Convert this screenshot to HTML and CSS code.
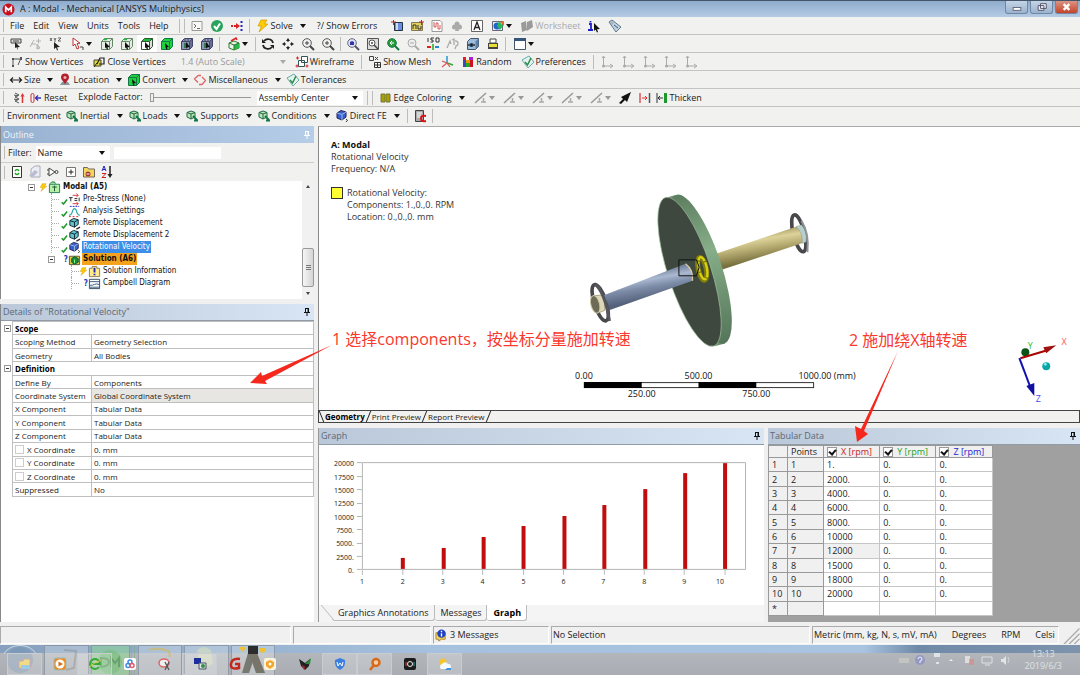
FILE: index.html
```html
<!DOCTYPE html>
<html lang="en">
<head>
    <meta charset="UTF-8">
    <meta name="viewport" content="width=device-width, initial-scale=1.0">
    <title>A : Modal - Mechanical [ANSYS Multiphysics]</title>
    <link rel="stylesheet" href="styles.css">
</head>
<body>
    <!-- Icon sprite -->
    <svg class="sprite" aria-hidden="true">
        <symbol id="console" viewBox="0 0 14 14"><path d="M2 2.500h10v9H2z" fill="#f8f8f8" stroke="#999"/><path d="M4 5l2 2-2 2M7 9.500h3" fill="none" stroke="#666"/></symbol>
        <symbol id="ok" viewBox="0 0 14 14"><circle cx="7" cy="7" r="6" fill="#2aa35e"/><path d="M4 7l2.500 3L10 4.500" fill="none" stroke="#fff" stroke-width="2"/></symbol>
        <symbol id="flow" viewBox="0 0 14 14"><path d="M1 7h5" stroke="#d22" stroke-width="2" stroke-dasharray="2 1"/><path d="M6 4l4 3-4 3z" fill="#d22"/><path d="M11.500 2v10" stroke="#22c" stroke-width="2" stroke-dasharray="2 2"/></symbol>
        <symbol id="bolt" viewBox="0 0 14 14"><path d="M5 1h6L8.500 5H12L3 13l2.500-6H2z" fill="#fc0" stroke="#c90" stroke-width=".7"/></symbol>
        <symbol id="chartnew" viewBox="0 0 14 14"><path d="M4.500 3.500h8v8h-8z" fill="#6a8fe0" stroke="#234"/><path d="M7 4v7" stroke="#cde" stroke-width="2"/><path d="M1 3h5M3.500 1v5" stroke="#c22"/></symbol>
        <symbol id="comment" viewBox="0 0 14 14"><path d="M1.500 3.500h11v8h-11z" fill="#dfd060" stroke="#875"/><path d="M3 10V6h3v4M8 6v4h3V7" fill="none" stroke="#333"/><path d="M9 3h5M11.500 1v5" stroke="#c22"/></symbol>
        <symbol id="figure" viewBox="0 0 14 14"><path d="M2 1.500h8l2 2v9H2z" fill="#fff" stroke="#999"/><path d="M4 3v5h2V4h2v6h2V6" fill="none" stroke="#d55"/></symbol>
        <symbol id="club" viewBox="0 0 14 14"><g fill="#aaa"><circle cx="7" cy="5" r="2.500"/><circle cx="4.500" cy="8" r="2.500"/><circle cx="9.500" cy="8" r="2.500"/><path d="M6 8h2l1 4H5z"/></g></symbol>
        <symbol id="annot" viewBox="0 0 14 14"><path d="M1.500 1.500h11v11h-11z" fill="#fff" stroke="#666"/><path d="M4 11l3-8 3 8M5 8.500h4" fill="none" stroke="#222" stroke-width="1.300"/></symbol>
        <symbol id="image" viewBox="0 0 14 14"><path d="M1.500 2.500h10v9h-10z" fill="#eef" stroke="#667"/><circle cx="6" cy="7" r="3.500" fill="#26c"/><path d="M6 7l2-5 4 5-3 4z" fill="#2b5"/><path d="M9 3l4-1v5z" fill="#e62"/></symbol>
        <symbol id="worksheet" viewBox="0 0 14 14"><path d="M1 4l5-2 1 9-5 2zM7 3l5-2 1 7-6 4z" fill="#9a9a9a"/></symbol>
        <symbol id="info" viewBox="0 0 14 14"><path d="M1 5h2v6M0 11h5M2.500 2v1.500" fill="none" stroke="#22c" stroke-width="1.800"/><path d="M6 4l6 6-3 .2L10 13l-1 .5-1.500-3L6 12z" fill="#111"/></symbol>
        <symbol id="tag" viewBox="0 0 14 14"><path d="M1 3l3-2 9 7-5 5z" fill="#bcd4e4" stroke="#678"/><circle cx="4" cy="4" r="1" fill="#fff" stroke="#678" stroke-width=".6"/><path d="M6 6l4 3" stroke="#456"/></symbol>
        <symbol id="pickbox" viewBox="0 0 14 14"><path d="M2 2h10v4H2zM4 4h6" fill="#ddd" stroke="#444"/><path d="M6 5l5 5-2.500.2.500 3-1.500-3L6 11z" fill="#222"/></symbol>
        <symbol id="pickgray" viewBox="0 0 14 14"><path d="M1 10l4-7M2 7h5M7 4h5M9.500 1.500v5M8 7l3 4-3 1z" fill="#ccc" stroke="#b4b4b4"/></symbol>
        <symbol id="xyz" viewBox="0 0 14 14"><path d="M1 1l2 3m0-3L1 4M5 1l1 2 1-2M6 3v2M9 1h3L9 4h3" fill="none" stroke="#444" stroke-width=".8"/><path d="M5 5l6 5-3 .2L9 13l-1 .5-1-3L5 12z" fill="#222"/></symbol>
        <symbol id="arrowsel" viewBox="0 0 14 14"><path d="M2 1v8l2-2 2 5 2-1-2-4.500 3-.3z" fill="#fff" stroke="#b33"/><path d="M9 10h3v3" fill="none" stroke="#444"/></symbol>
        <symbol id="cubew" viewBox="0 0 14 14"><path d="M1.500 4.500l3-3h8v8l-3 3h-8z" fill="#e4ece4" stroke="#686"/><path d="M1.500 4.500h8v8M9.500 4.500l3-3" fill="none" stroke="#686"/><path d="M4 2.500h3" stroke="#2b4" stroke-width="1.500"/><path d="M5 5l5 5-2.500.2.500 2-1 .5-1-2.500-1 1z" fill="#111"/></symbol>
        <symbol id="cubetop" viewBox="0 0 14 14"><path d="M1.500 4.500h8v8h-8z" fill="#fff" stroke="#353"/><path d="M1.500 4.500l3-3h8l-3 3z" fill="#1db93b" stroke="#353"/><path d="M12.500 1.500v8l-3 3v-8z" fill="#ddd" stroke="#353"/><path d="M5 5l5 5-2.500.2.500 2-1 .5-1-2.500-1 1z" fill="#111"/></symbol>
        <symbol id="cubeg" viewBox="0 0 14 14"><path d="M1.500 4.500l3-3h8v8l-3 3h-8z" fill="#1fd03f" stroke="#174"/><path d="M1.500 4.500h8v8M9.500 4.500l3-3" fill="none" stroke="#174"/><path d="M5 6l4 4-2 .2.500 2-1 .5-1-2.500z" fill="#111"/></symbol>
        <symbol id="cubed" viewBox="0 0 14 14"><path d="M1.500 4.500l3-3h8v8l-3 3h-8z" fill="#8a9ab8" stroke="#446"/><path d="M1.500 4.500h8v8M9.500 4.500l3-3M5 2v3M8 2v3M11 3v8" fill="none" stroke="#446"/><path d="M4 6h4v5H4z" fill="#375"/><path d="M6 5l4 5-3 .2L6 12z" fill="#111"/></symbol>
        <symbol id="cubeax" viewBox="0 0 14 14"><path d="M2 6l5-2 5 2v5l-5 2-5-2z" fill="#e8f4e8" stroke="#373"/><path d="M7 8l5-2v5l-5 2z" fill="#2b4"/><path d="M2 6l5 2 5-2M7 8v5" fill="none" stroke="#373"/><path d="M4 4l5-3 1 2" fill="none" stroke="#d22" stroke-width="1.500"/></symbol>
        <symbol id="rotate" viewBox="0 0 14 14"><path d="M12 6a5 4.500 0 0 0-9-2M2 8a5 4.500 0 0 0 9 2" fill="none" stroke="#222" stroke-width="1.700"/><path d="M1 2v4h4zM13 12V8H9z" fill="#222"/></symbol>
        <symbol id="pan" viewBox="0 0 14 14"><path d="M7 1l2 3H5zM7 13l2-3H5zM1 7l3-2v4zM13 7l-3-2v4z" fill="#222"/><path d="M7 3v2M7 9v2M3 7h2M9 7h2" stroke="#222"/></symbol>
        <symbol id="lens" viewBox="0 0 14 14"><circle cx="6" cy="6" r="4.300" fill="#f2f2f2" stroke="#555"/><path d="M4 6h4M6 4v4" stroke="#444"/><path d="M9 9l4 4" stroke="#444" stroke-width="2"/></symbol>
        <symbol id="lensblue" viewBox="0 0 14 14"><circle cx="6" cy="6" r="4.300" fill="#dde4ff" stroke="#667"/><path d="M4 5l2-1 2 1v3H4z" fill="#33a"/><path d="M9 9l4 4" stroke="#556" stroke-width="2"/></symbol>
        <symbol id="lensbox" viewBox="0 0 14 14"><path d="M1.500 1.500h11v11h-11z" fill="#ddd" stroke="#555"/><circle cx="6" cy="6" r="3" fill="#fff" stroke="#555"/><path d="M8 8l4 4M5 6h2" stroke="#444" stroke-width="1.500"/></symbol>
        <symbol id="lensgreen" viewBox="0 0 14 14"><circle cx="6" cy="6" r="4.300" fill="#2a9b3a" stroke="#174"/><path d="M8 6H4M6 4L4 6l2 2" stroke="#fff" fill="none"/><path d="M9 9l4 4" stroke="#174" stroke-width="2"/></symbol>
        <symbol id="lensgray" viewBox="0 0 14 14"><circle cx="6" cy="6" r="4" fill="#eee" stroke="#aaa"/><path d="M4 6h4" stroke="#aaa"/><path d="M9 9l4 4" stroke="#aaa" stroke-width="2"/></symbol>
        <symbol id="iso" viewBox="0 0 14 14"><path d="M2 1v4M8 1H5v2h2v2H4.500M10 1h3v4h-3z" fill="none" stroke="#333"/><path d="M7 7v6" stroke="#2a2" stroke-width="1.500"/><path d="M1 10h4" stroke="#d22" stroke-width="2"/><path d="M9 10h4" stroke="#28c" stroke-width="2"/></symbol>
        <symbol id="lookat" viewBox="0 0 14 14"><path d="M1 11l3-7 1 3M6 3l2-1v6M9 4a2.500 2.500 0 1 1 1 5l-1 3" fill="none" stroke="#aaa" stroke-width="1.300"/></symbol>
        <symbol id="eyecube" viewBox="0 0 14 14"><path d="M1.500 4.500l3-3h8v8l-3 3h-8z" fill="#9bbcdc" stroke="#456"/><path d="M9.500 4.500l3-3v8l-3 3z" fill="#5f7fa8"/><path d="M2 8q3.500-3 7 0-3.500 3-7 0z" fill="#fff" stroke="#234"/><circle cx="5.500" cy="8" r="1.500" fill="#123"/></symbol>
        <symbol id="printer" viewBox="0 0 14 14"><path d="M4 2h6v4H4z" fill="#fff" stroke="#444"/><path d="M2 6h10v6H2z" fill="#444"/><path d="M3 7h8v3H3z" fill="#e8df30"/></symbol>
        <symbol id="window" viewBox="0 0 14 14"><path d="M1.500 1.500h11v11h-11z" fill="#fff" stroke="#456"/><path d="M1 1h12v3H1z" fill="#357"/></symbol>
        <symbol id="vertex" viewBox="0 0 14 14"><path d="M3 4h9M11 3L8 10M3 4v7" fill="none" stroke="#555"/><path d="M2 3h2v2H2zM10 2h2v3h-2zM2 10h2v2H2z" fill="#555"/></symbol>
        <symbol id="closev" viewBox="0 0 14 14"><path d="M2 5h7v6H2z" fill="#e4d936" stroke="#443"/><path d="M5 9l3-6h4v6H7" fill="none" stroke="#222" stroke-width="1.200"/><path d="M2 12l3-4" stroke="#222"/></symbol>
        <symbol id="wire" viewBox="0 0 14 14"><path d="M6.500 1.500h6v6h-6zM3.500 5.500h6v6h-6z" fill="#fff" stroke="#355"/><path d="M1 3h3M2.500 1.500v3M.500 11h3M2 9.500v3M10.500 11h3M12 9.500v3" stroke="#d22"/></symbol>
        <symbol id="mesh" viewBox="0 0 14 14"><path d="M1.500 1.500h4v4h-4zM7 2l3 3m0-3L7 5" fill="none" stroke="#444"/><path d="M6.500 7.500h6v5h-6zM9.500 7v6M6 10h7" fill="#fff" stroke="#333"/></symbol>
        <symbol id="axes" viewBox="0 0 14 14"><path d="M7 8V1" stroke="#29c" stroke-width="1.500"/><path d="M7 8l6 2" stroke="#3a3" stroke-width="1.500"/><path d="M7 8l-5 4M2 6l5 2 3 4" fill="none" stroke="#d55" stroke-width="1.200"/></symbol>
        <symbol id="random" viewBox="0 0 14 14"><path d="M2 2h3v3H2z" fill="#d22"/><path d="M5 5h4v3H5z" fill="#e90"/><path d="M8 2h4v3H8z" fill="#a2c"/><path d="M2 5h3v7H2z" fill="#44b"/><path d="M9 5h3v7H9z" fill="#c12"/><path d="M5 8h4v4H5z" fill="#2a2"/></symbol>
        <symbol id="pref" viewBox="0 0 14 14"><path d="M1 5l7-4 5 6-6 6z" fill="#e4f3ee" stroke="#6aa"/><path d="M4 7l2.500 3L10 3" fill="none" stroke="#2a8a4a" stroke-width="1.500"/></symbol>
        <symbol id="csys" viewBox="0 0 14 14"><path d="M3.500 2v9H12M2 3l1.500-2L5 3M10 9l3 2-3 2" fill="none" stroke="#aaa"/><circle cx="3.500" cy="11" r="1.500" fill="#aaa"/></symbol>
        <symbol id="size" viewBox="0 0 14 14"><path d="M2 7h10M4 4.500L1.500 7 4 9.500M10 4.500L12.500 7 10 9.500" fill="none" stroke="#222" stroke-width="1.200"/></symbol>
        <symbol id="pin" viewBox="0 0 14 14"><path d="M2 12h10l-2-3H4z" fill="#899"/><path d="M7 11C4 7 3 6 3 4.500a4 4 0 0 1 8 0C11 6 10 7 7 11z" fill="#b3202c"/><circle cx="7" cy="4.500" r="1.500" fill="#e8b0b0"/></symbol>
        <symbol id="misc" viewBox="0 0 14 14"><path d="M5 2.500L1.500 6 5 9.500M9 11.500l3.500-4L9 4M5 2.500h3M9 11.500H6" fill="none" stroke="#d66" stroke-width="1.300"/></symbol>
        <symbol id="spring" viewBox="0 0 14 14"><path d="M3 2l4 2-4 2 4 2-4 2 4 2M2 4l4 1M2 8l4 1" fill="none" stroke="#555"/><path d="M10.500 5v7" stroke="#d33" stroke-width="1.500"/><path d="M10.500 2L8.500 5.500h4z" fill="#d33"/></symbol>
        <symbol id="reset" viewBox="0 0 14 14"><rect x="2" y="2.500" width="3" height="9" rx="1.500" fill="none" stroke="#c33"/><path d="M6 7h6M9 4.500L6.500 7 9 9.500" fill="none" stroke="#33b" stroke-width="1.300"/></symbol>
        <symbol id="edge" viewBox="0 0 14 14"><path d="M2 3h4v8H2zM7 3h4v8H7z" fill="#a8a000" stroke="#774"/></symbol>
        <symbol id="slash" viewBox="0 0 14 14"><path d="M1 12L12 2" stroke="#999" stroke-width="1.500"/><path d="M7 11h5M9.500 7v4" stroke="#aaa" stroke-width="1.500"/></symbol>
        <symbol id="bigarrow" viewBox="0 0 14 14"><path d="M1 12l4-4-2-2 10-5-4 10-2-2-4 4z" fill="#111"/></symbol>
        <symbol id="gap" viewBox="0 0 14 14"><path d="M2 2v10" stroke="#d55" stroke-width="1.500"/><path d="M11.500 2v10" stroke="#555" stroke-width="1.500"/><path d="M4 7h5M7 5l2 2-2 2" stroke="#d33" fill="none"/></symbol>
        <symbol id="thick" viewBox="0 0 14 14"><path d="M2 2v10M3 7h5M5 5L3 7l2 2" stroke="#333" fill="none"/><path d="M10.500 2v10" stroke="#1a9a2a" stroke-width="3"/></symbol>
        <symbol id="load" viewBox="0 0 14 14"><path d="M2 3.500L6 2l4 1.500V8L6 10 2 8z" fill="#b8e6b8" stroke="#264"/><path d="M2 3.500L6 5v5M6 5l4-1.500" fill="none" stroke="#264"/><path d="M8 7l4 4M9 11.500h4" fill="none" stroke="#174" stroke-width="1.800"/></symbol>
        <symbol id="disp" viewBox="0 0 14 14"><path d="M2 4l4-2.500L11 3v5l-4 3-5-2z" fill="#5fc4c8" stroke="#123"/><path d="M2 4l5 1.500V11M7 5.500L11 3" fill="none" stroke="#123"/><path d="M9 13l4-2" stroke="#333" stroke-width="1.500"/></symbol>
        <symbol id="rotv" viewBox="0 0 14 14"><path d="M2 4l4-2.500L11 3v5l-4 3-5-2z" fill="#3a5fd0" stroke="#225"/><path d="M2 4l5 1.500V11M7 5.500L11 3" fill="none" stroke="#9bd"/><path d="M11 10q3 1 0 3" stroke="#333" fill="none"/></symbol>
        <symbol id="report" viewBox="0 0 14 14"><path d="M2.500 1.500h8v11h-8z" fill="#aaa" stroke="#444"/><path d="M4 4h5M4 6h4M4 8h3" stroke="#fff"/><path d="M13 7q-5-1-5 2.500T13 12" fill="none" stroke="#d11" stroke-width="2"/></symbol>
        <symbol id="refresh" viewBox="0 0 14 14"><path d="M2.500 1.500h9v11h-9z" fill="#fff" stroke="#333"/><path d="M5 6q2-3 4 0M9 8q-2 3-4 0" fill="none" stroke="#2a2" stroke-width="1.500"/></symbol>
        <symbol id="clear" viewBox="0 0 14 14"><path d="M3 12V4l4-3h5v11z" fill="#ececf4" stroke="#aab"/><path d="M1 11L7 5l3 2-5 5z" fill="#b8bcd0"/></symbol>
        <symbol id="gate" viewBox="0 0 14 14"><path d="M3 3l6 4-6 4zM1 5h2M1 9h2" fill="#fff" stroke="#444"/><circle cx="10.500" cy="7" r="1.500" fill="none" stroke="#444"/></symbol>
        <symbol id="plus" viewBox="0 0 14 14"><path d="M2.500 2.500h9v9h-9z" fill="#fff" stroke="#777"/><path d="M4.500 7h5M7 4.500v5" stroke="#222"/></symbol>
        <symbol id="folder" viewBox="0 0 14 14"><path d="M1.500 4V2.500h4l1 1.500h6v8h-11z" fill="#f0d860" stroke="#765"/><circle cx="6" cy="9" r="2.500" fill="#a33"/><path d="M4.500 9h3" stroke="#fff"/></symbol>
        <symbol id="sort" viewBox="0 0 14 14"><path d="M2 6l2-5 2 5M3 4.500h2" fill="none" stroke="#22b"/><path d="M2 8.500h4L2 12.500h4" fill="none" stroke="#c22"/><path d="M10 1v9" stroke="#222" stroke-width="1.500"/><path d="M7.500 9h5L10 13z" fill="#222"/></symbol>
        <symbol id="model" viewBox="0 0 14 14"><path d="M1.500 3.500h11v9h-11z" fill="#b8f0a8" stroke="#275"/><path d="M2 3l2-2h3l1 2" fill="#8d8" stroke="#275"/><path d="M7 5v6M4.500 6.500h5" stroke="#153"/></symbol>
        <symbol id="prestress" viewBox="0 0 14 14"><path d="M1 5h4M3 5v4M7 6h3M7 8h3M12 5v4" stroke="#222" fill="none"/><path d="M5 2.500h6M9 .5l2 2-2 2M5 11.500h6M9 9.500l2 2-2 2" fill="none" stroke="#d33"/></symbol>
        <symbol id="settings" viewBox="0 0 14 14"><path d="M2 1.500h10" stroke="#22c" stroke-dasharray="2 1"/><path d="M1 11q3 0 4-5 2-4 4 0 1 5 4 5" fill="none" stroke="#3aa" stroke-width="1.300"/><path d="M1 12.500h12" stroke="#d22" stroke-dasharray="2 2"/></symbol>
        <symbol id="solution" viewBox="0 0 14 14"><path d="M1.500 3.500h11v9h-11z" fill="#e8c840" stroke="#553"/><path d="M4 6l3-2 4 2v4l-4 2-3-2z" fill="#1b8a3b" stroke="#053"/><path d="M7 7v4" stroke="#8f8"/></symbol>
        <symbol id="sinfo" viewBox="0 0 14 14"><path d="M1.500 3.500h3v-2h5v2h3v9h-11z" fill="#ffec90" stroke="#875"/><path d="M7 3v5M7 9.500v1.500" stroke="#22a" stroke-width="2"/></symbol>
        <symbol id="campbell" viewBox="0 0 14 14"><path d="M1.500 2.500h11v10h-11z" fill="#fff" stroke="#345"/><path d="M2 5h10M2 9q3 0 5-1t5 0M2 11h10" fill="none" stroke="#357"/></symbol>
        <symbol id="check" viewBox="0 0 10 12"><path d="M3 9l2 2 4-5" fill="none" stroke="#1a9a2a" stroke-width="1.700"/></symbol>
        <symbol id="pushpin" viewBox="0 0 10 10"><path d="M3 1.500h4M3.500 1v4.500M6.500 1v4.500M2 5.500h6M5 6v3" fill="none" stroke="currentColor"/><path d="M5.500 1.500h1.500v4H5.500z" fill="currentColor"/></symbol>
    </svg>

    <header class="titlebar">
        <svg class="app-logo" viewBox="0 0 14 14" aria-hidden="true"><circle cx="7" cy="7" r="6.500" fill="#c8101c"/><path d="M4 10V4.500l3 3 3-3V10" fill="none" stroke="#fff" stroke-width="1.800"/></svg>
        <h1>A : Modal - Mechanical [ANSYS Multiphysics]</h1>
        <div class="window-buttons">
            <button type="button" aria-label="Minimize"><svg viewBox="0 0 22 12"><rect x="7.500" y="6.500" width="8" height="3" fill="#fff" stroke="#667"/></svg></button>
            <button type="button" aria-label="Restore"><svg viewBox="0 0 22 12"><path d="M10 2.500h6v5h-6zM7.500 4.500h6v5h-6z" fill="#eef" stroke="#556"/></svg></button>
            <button type="button" class="close" aria-label="Close"><svg viewBox="0 0 22 12"><path d="M8 3l6 6M14 3L8 9" stroke="#fff" stroke-width="2.500"/></svg></button>
        </div>
    </header>

    <div class="toolbars">
        <div class="bar">
            <nav class="menu">
                <button type="button">File</button>
                <button type="button">Edit</button>
                <button type="button">View</button>
                <button type="button">Units</button>
                <button type="button">Tools</button>
                <button type="button">Help</button>
            </nav>
            <i class="sep"></i><i class="sep"></i>
            <button type="button" class="tool" aria-label="Command line"><svg><use href="#console"/></svg></button>
            <button type="button" class="tool" aria-label="Check"><svg><use href="#ok"/></svg></button>
            <button type="button" class="tool" aria-label="Flow"><svg><use href="#flow"/></svg></button>
            <i class="sep"></i>
            <button type="button" class="item drop spaced"><svg><use href="#bolt"/></svg>Solve</button>
            <button type="button" class="item roomy">?/ Show Errors</button>
            <button type="button" class="tool" aria-label="New chart"><svg><use href="#chartnew"/></svg></button>
            <button type="button" class="tool" aria-label="New comment"><svg><use href="#comment"/></svg></button>
            <button type="button" class="tool" aria-label="New figure"><svg><use href="#figure"/></svg></button>
            <button type="button" class="tool" aria-label="Selection info"><svg><use href="#club"/></svg></button>
            <button type="button" class="tool" aria-label="Annotation"><svg><use href="#annot"/></svg></button>
            <button type="button" class="tool drop" aria-label="Image"><svg><use href="#image"/></svg></button>
            <button type="button" class="item off spaced"><svg><use href="#worksheet"/></svg>Worksheet</button>
            <button type="button" class="tool" aria-label="Information"><svg><use href="#info"/></svg></button>
            <button type="button" class="tool" aria-label="Tag"><svg><use href="#tag"/></svg></button>
        </div>

        <div class="bar icons">
            <button type="button" class="tool" aria-label="Label"><svg><use href="#pickbox"/></svg></button>
            <button type="button" class="tool" aria-label="Direction"><svg><use href="#pickgray"/></svg></button>
            <button type="button" class="tool" aria-label="Coordinates"><svg><use href="#xyz"/></svg></button>
            <button type="button" class="tool drop" aria-label="Select mode"><svg><use href="#arrowsel"/></svg></button>
            <button type="button" class="tool" aria-label="Vertex"><svg><use href="#cubew"/></svg></button>
            <button type="button" class="tool" aria-label="Edge"><svg><use href="#cubew"/></svg></button>
            <button type="button" class="tool active" aria-label="Face"><svg><use href="#cubetop"/></svg></button>
            <button type="button" class="tool" aria-label="Body"><svg><use href="#cubeg"/></svg></button>
            <button type="button" class="tool" aria-label="Node"><svg><use href="#cubed"/></svg></button>
            <button type="button" class="tool" aria-label="Element"><svg><use href="#cubed"/></svg></button>
            <i class="sep"></i>
            <button type="button" class="tool drop" aria-label="Extend"><svg><use href="#cubeax"/></svg></button>
            <i class="sep"></i>
            <button type="button" class="tool" aria-label="Rotate"><svg><use href="#rotate"/></svg></button>
            <button type="button" class="tool" aria-label="Pan"><svg><use href="#pan"/></svg></button>
            <button type="button" class="tool" aria-label="Zoom"><svg><use href="#lens"/></svg></button>
            <button type="button" class="tool" aria-label="Box zoom"><svg><use href="#lens"/></svg></button>
            <i class="sep"></i>
            <button type="button" class="tool" aria-label="Zoom to fit"><svg><use href="#lensblue"/></svg></button>
            <button type="button" class="tool" aria-label="Magnifier"><svg><use href="#lensbox"/></svg></button>
            <button type="button" class="tool" aria-label="Previous view"><svg><use href="#lensgreen"/></svg></button>
            <button type="button" class="tool" aria-label="Next view"><svg><use href="#lensgray"/></svg></button>
            <button type="button" class="tool" aria-label="Isometric"><svg><use href="#iso"/></svg></button>
            <button type="button" class="tool" aria-label="Look at"><svg><use href="#lookat"/></svg></button>
            <button type="button" class="tool" aria-label="Manage views"><svg><use href="#eyecube"/></svg></button>
            <button type="button" class="tool" aria-label="Print"><svg><use href="#printer"/></svg></button>
            <i class="sep"></i>
            <button type="button" class="tool drop" aria-label="Viewports"><svg><use href="#window"/></svg></button>
        </div>

        <div class="bar wide">
            <button type="button" class="item"><svg><use href="#vertex"/></svg>Show Vertices</button>
            <button type="button" class="item"><svg><use href="#closev"/></svg>Close Vertices</button>
            <span class="select scale"><select aria-label="Scale" disabled><option>1.4 (Auto Scale)</option></select></span>
            <button type="button" class="item"><svg><use href="#wire"/></svg>Wireframe</button>
            <i class="sep"></i>
            <button type="button" class="item"><svg><use href="#mesh"/></svg>Show Mesh</button>
            <button type="button" class="tool" aria-label="Axes"><svg><use href="#axes"/></svg></button>
            <button type="button" class="item"><svg><use href="#random"/></svg>Random</button>
            <button type="button" class="item"><svg><use href="#pref"/></svg>Preferences</button>
            <i class="sep"></i>
            <button type="button" class="tool" aria-label="Csys 1"><svg><use href="#csys"/></svg></button>
            <button type="button" class="tool" aria-label="Csys 2"><svg><use href="#csys"/></svg></button>
            <button type="button" class="tool" aria-label="Csys 3"><svg><use href="#csys"/></svg></button>
            <button type="button" class="tool" aria-label="Csys 4"><svg><use href="#csys"/></svg></button>
            <button type="button" class="tool" aria-label="Csys 5"><svg><use href="#csys"/></svg></button>
        </div>

        <div class="bar">
            <button type="button" class="item drop"><svg><use href="#size"/></svg>Size</button>
            <button type="button" class="item drop"><svg><use href="#pin"/></svg>Location</button>
            <button type="button" class="item drop"><svg><use href="#cubeg"/></svg>Convert</button>
            <button type="button" class="item drop"><svg><use href="#misc"/></svg>Miscellaneous</button>
            <button type="button" class="item"><svg><use href="#pref"/></svg>Tolerances</button>
        </div>

        <div class="bar">
            <button type="button" class="tool" aria-label="Spring"><svg><use href="#spring"/></svg></button>
            <button type="button" class="item"><svg><use href="#reset"/></svg>Reset</button>
            <label for="explode" class="explode">Explode Factor:</label>
            <input type="range" id="explode" min="0" max="100" value="0">
            <span class="select center"><select aria-label="Explode center"><option>Assembly Center</option></select></span>
            <i class="sep"></i><i class="sep"></i>
            <button type="button" class="item drop spaced"><svg><use href="#edge"/></svg>Edge Coloring</button>
            <button type="button" class="tool drop off" aria-label="Edge 0"><svg><use href="#slash"/></svg></button>
            <button type="button" class="tool drop off" aria-label="Edge 1"><svg><use href="#slash"/></svg></button>
            <button type="button" class="tool drop off" aria-label="Edge 2"><svg><use href="#slash"/></svg></button>
            <button type="button" class="tool drop off" aria-label="Edge 3"><svg><use href="#slash"/></svg></button>
            <button type="button" class="tool drop off" aria-label="Edge X"><svg><use href="#slash"/></svg></button>
            <button type="button" class="tool" aria-label="Edge direction"><svg><use href="#bigarrow"/></svg></button>
            <button type="button" class="tool" aria-label="Gap"><svg><use href="#gap"/></svg></button>
            <button type="button" class="item"><svg><use href="#thick"/></svg>Thicken</button>
        </div>

        <div class="bar">
            <span class="bar-name">Environment</span>
            <button type="button" class="item drop"><svg><use href="#load"/></svg>Inertial</button>
            <button type="button" class="item drop"><svg><use href="#load"/></svg>Loads</button>
            <button type="button" class="item drop"><svg><use href="#load"/></svg>Supports</button>
            <button type="button" class="item drop"><svg><use href="#load"/></svg>Conditions</button>
            <button type="button" class="item drop"><svg><use href="#rotv"/></svg>Direct FE</button>
            <i class="sep"></i>
            <button type="button" class="tool" aria-label="Commands"><svg><use href="#report"/></svg></button>
            <i class="sep"></i>
        </div>
    </div>

    <main class="workspace">
        <div class="side">
            <section class="panel outline">
                <h2 class="panel-title current">Outline <svg><use href="#pushpin"/></svg></h2>
                <div class="filter">
                    <label for="filter">Filter:</label>
                    <span class="select name"><select id="filter"><option>Name</option></select></span>
                    <input type="text" aria-label="Filter text">
                </div>
                <div class="tree-tools">
                    <button type="button" class="tool" aria-label="Refresh"><svg><use href="#refresh"/></svg></button>
                    <button type="button" class="tool" aria-label="Clear"><svg><use href="#clear"/></svg></button>
                    <button type="button" class="tool" aria-label="Filter tree"><svg><use href="#gate"/></svg></button>
                    <button type="button" class="tool" aria-label="Expand all"><svg><use href="#plus"/></svg></button>
                    <button type="button" class="tool" aria-label="Folders"><svg><use href="#folder"/></svg></button>
                    <button type="button" class="tool" aria-label="Sort"><svg><use href="#sort"/></svg></button>
                </div>
                <div class="tree-area">
                    <ul class="tree">
                        <li>
                            <div class="node"><i class="twist"></i><svg class="state"><use href="#bolt"/></svg><svg><use href="#model"/></svg><b>Modal (A5)</b></div>
                            <ul>
                                <li><div class="node"><i class="branch"></i><svg class="state"><use href="#check"/></svg><svg><use href="#prestress"/></svg><span>Pre-Stress (None)</span></div></li>
                                <li><div class="node"><i class="branch"></i><svg class="state"><use href="#check"/></svg><svg><use href="#settings"/></svg><span>Analysis Settings</span></div></li>
                                <li><div class="node"><i class="branch"></i><svg class="state"><use href="#check"/></svg><svg><use href="#disp"/></svg><span>Remote Displacement</span></div></li>
                                <li><div class="node"><i class="branch"></i><svg class="state"><use href="#check"/></svg><svg><use href="#disp"/></svg><span>Remote Displacement 2</span></div></li>
                                <li><div class="node"><i class="branch"></i><svg class="state"><use href="#check"/></svg><svg><use href="#rotv"/></svg><span class="selected">Rotational Velocity</span></div></li>
                                <li>
                                    <div class="node"><i class="twist"></i><em class="state">?</em><svg><use href="#solution"/></svg><b class="marked">Solution (A6)</b></div>
                                    <ul>
                                        <li><div class="node"><i class="branch"></i><svg class="state"><use href="#bolt"/></svg><svg><use href="#sinfo"/></svg><span>Solution Information</span></div></li>
                                        <li><div class="node"><i class="branch"></i><em class="state">?</em><svg><use href="#campbell"/></svg><span>Campbell Diagram</span></div></li>
                                    </ul>
                                </li>
                            </ul>
                        </li>
                    </ul>
                    <div class="scrollbar">
                        <svg viewBox="0 0 12 12"><path d="M4 7l2-3 2 3z" fill="#444"/></svg>
                        <div class="thumb"></div>
                        <svg viewBox="0 0 12 12"><path d="M4 5l2 3 2-3z" fill="#444"/></svg>
                    </div>
                </div>
            </section>

            <section class="panel details">
                <h2 class="panel-title">Details of "Rotational Velocity" <svg><use href="#pushpin"/></svg></h2>
                <table class="props">
                    <colgroup><col class="gutter-col"><col class="name-col"><col></colgroup>
                    <tbody>
                        <tr class="group"><td class="gutter"><i class="twist"></i></td><th colspan="2">Scope</th></tr>
                        <tr><td class="gutter"></td><th>Scoping Method</th><td>Geometry Selection</td></tr>
                        <tr><td class="gutter"></td><th>Geometry</th><td>All Bodies</td></tr>
                        <tr class="group"><td class="gutter"><i class="twist"></i></td><th colspan="2">Definition</th></tr>
                        <tr><td class="gutter"></td><th>Define By</th><td>Components</td></tr>
                        <tr class="locked"><td class="gutter"></td><th>Coordinate System</th><td>Global Coordinate System</td></tr>
                        <tr><td class="gutter"></td><th>X Component</th><td>Tabular Data</td></tr>
                        <tr><td class="gutter"></td><th>Y Component</th><td>Tabular Data</td></tr>
                        <tr><td class="gutter"></td><th>Z Component</th><td>Tabular Data</td></tr>
                        <tr><td class="gutter"></td><th><label><input type="checkbox">X Coordinate</label></th><td>0. mm</td></tr>
                        <tr><td class="gutter"></td><th><label><input type="checkbox">Y Coordinate</label></th><td>0. mm</td></tr>
                        <tr><td class="gutter"></td><th><label><input type="checkbox">Z Coordinate</label></th><td>0. mm</td></tr>
                        <tr><td class="gutter"></td><th>Suppressed</th><td>No</td></tr>
                    </tbody>
                </table>
            </section>
        </div>

        <div class="content">
            <section class="viewport">
                <div class="legend">
                    <b>A: Modal</b>
                    <p>Rotational Velocity</p>
                    <p>Frequency: N/A</p>
                    <div class="legend-item">
                        <i class="swatch"></i>
                        <div>
                            <p>Rotational Velocity:</p>
                            <p>Components: 1.,0.,0. RPM</p>
                            <p>Location: 0.,0.,0. mm</p>
                        </div>
                    </div>
                </div>
                <svg class="scene" viewBox="318 126 762 284" role="img" aria-label="Rotor model">
                    <defs>
                        <linearGradient id="steel" x1="0" y1="0" x2=".33" y2="1"><stop offset=".25" stop-color="#64748e"/><stop offset=".45" stop-color="#aab8d0"/><stop offset=".6" stop-color="#7d8ca8"/><stop offset=".85" stop-color="#55617a"/></linearGradient>
                        <linearGradient id="brass" x1="0" y1="0" x2=".33" y2="1"><stop offset=".25" stop-color="#a49a62"/><stop offset=".42" stop-color="#ddd39a"/><stop offset=".6" stop-color="#b5aa70"/><stop offset=".85" stop-color="#77703f"/></linearGradient>
                        <linearGradient id="rim" x1="0" y1="0" x2="0" y2="1"><stop offset="0" stop-color="#5c7d5f"/><stop offset=".4" stop-color="#86ae88"/><stop offset="1" stop-color="#55755a"/></linearGradient>
                    </defs>
                    <!-- rotor -->
                    <g transform="translate(570 180) scale(.3333)">
                        <ellipse cx="686" cy="158" rx="17" ry="57" transform="rotate(-14 686 158)" fill="none" stroke="#48484c" stroke-width="11"/>
                        <path d="M430 222L682 137Q705 150 702 186L445 271z" fill="url(#brass)"/>
                        <path d="M678 138l16-6q18 20 14 52l-12 4q4-30-18-50z" fill="#b8d0cc" stroke="#778"/>
                        <path d="M694 120q24 38 18 95" fill="none" stroke="#909499" stroke-width="6"/>
                        <path d="M283 52L315 43 464 490 432 498z" fill="#6c9070"/>
                        <ellipse cx="389" cy="266" rx="65" ry="235" transform="rotate(-18 389 266)" fill="url(#rim)"/>
                        <ellipse cx="357" cy="274" rx="65" ry="235" transform="rotate(-18 357 274)" fill="#3e483e" stroke="#9fbf9c" stroke-width="2"/>
                        <ellipse cx="395" cy="265" rx="12" ry="35" transform="rotate(-12 395 265)" fill="none" stroke="#827e0c" stroke-width="15"/>
                        <ellipse cx="397" cy="263" rx="12" ry="34" transform="rotate(-12 397 263)" fill="none" stroke="#d8d010" stroke-width="7" stroke-dasharray="30 4"/>
                        <ellipse cx="88" cy="367" rx="18" ry="57" transform="rotate(-18 88 367)" fill="none" stroke="#48484c" stroke-width="11"/>
                        <path d="M95 346L345 250Q370 265 366 301L115 390Q112 360 95 346z" fill="url(#steel)"/>
                        <path d="M345 250q24 18 21 51" fill="none" stroke="#d8c9a2" stroke-width="4"/>
                        <path d="M325 238h53l8 22-8 26h-53z" fill="none" stroke="#111" stroke-width="3"/>
                        <path d="M70 346l22-2q14 20 10 46l-22 9z" fill="#ded8b8" stroke="#888468" stroke-width="2"/>
                        <ellipse cx="73" cy="372" rx="13" ry="27" transform="rotate(-14 73 372)" fill="#6d6a55" stroke="#c9c4a4" stroke-width="3"/>
                        <path d="M72 310q30 25 44 112" fill="none" stroke="#55565c" stroke-width="9"/>
                    </g>
                    <!-- ruler -->
                    <rect x="583.500" y="382.500" width="230" height="5" fill="#fff" stroke="#333"/>
                    <path d="M583 382h58v6h-58zM698 382h58v6h-58z"/>
                    <g class="ruler-text">
                        <text x="583" y="379">0.00</text>
                        <text x="698" y="379">500.00</text>
                        <text x="827" y="379">1000.00 (mm)</text>
                        <text x="641" y="397">250.00</text>
                        <text x="756" y="397">750.00</text>
                    </g>
                    <!-- triad -->
                    <circle cx="1026" cy="352" r="4" fill="#0b5418"/>
                    <path d="M1021 358l27-8" stroke="#a00" stroke-width="2"/>
                    <path d="M1044 347l13-2-10 8z" fill="#a01010"/>
                    <path d="M1020 358l11 29" stroke="#1212b0" stroke-width="2"/>
                    <path d="M1027 386l8-3v13z" fill="#1010a0"/>
                    <circle cx="1047" cy="366" r="4" fill="#0aa5a5"/>
                    <circle cx="1046" cy="364" r="1.500" fill="#7ee"/>
                    <g class="axis-text">
                        <text x="1065" y="345" fill="#f55">X</text>
                        <text x="1031" y="349" fill="#3b3">Y</text>
                        <text x="1039" y="402" fill="#44e">Z</text>
                    </g>
                </svg>
            </section>
            <div class="view-tabs">
                <button type="button" class="on">Geometry</button>
                <button type="button">Print Preview</button>
                <button type="button">Report Preview</button>
            </div>

            <div class="lower">
                <section class="panel graph">
                    <h2 class="panel-title">Graph <svg><use href="#pushpin"/></svg></h2>
                    <svg class="chart" viewBox="318 446 446 160" role="img" aria-label="Speed steps">
                        <path d="M361.500 463.500h384v107h-384zM356 463.500h5M356 477.500h5M356 490.500h5M356 504.500h5M356 517.500h5M356 530.500h5M356 544.500h5M356 557.500h5M356 570.500h5" fill="none" stroke="#b4b4b4"/>
                        <path d="M361.500 571v5M402 571v5M442 571v5M482 571v5M523 571v5M563 571v5M604 571v5M644 571v5M684 571v5M725 571v5" stroke="#bbb"/>
                        <g class="bars">
                            <rect x="400" y="559" width="4" height="11"/>
                            <rect x="441" y="549" width="4" height="21"/>
                            <rect x="481" y="538" width="4" height="32"/>
                            <rect x="521" y="527" width="4" height="43"/>
                            <rect x="562" y="517" width="4" height="53"/>
                            <rect x="602" y="506" width="4" height="64"/>
                            <rect x="643" y="490" width="4" height="80"/>
                            <rect x="683" y="474" width="4" height="96"/>
                            <rect x="723" y="464" width="4" height="106"/>
                        </g>
                        <g class="y-text">
                            <text x="353" y="467">20000</text><text x="353" y="481">17500</text><text x="353" y="494">15000</text>
                            <text x="353" y="507">12500</text><text x="353" y="521">10000</text><text x="353" y="534">7500.</text>
                            <text x="353" y="547">5000.</text><text x="353" y="561">2500.</text><text x="353" y="574">0.</text>
                        </g>
                        <g class="x-text">
                            <text x="361" y="585">1</text><text x="402" y="585">2</text><text x="442" y="585">3</text><text x="482" y="585">4</text><text x="523" y="585">5</text>
                            <text x="563" y="585">6</text><text x="603" y="585">7</text><text x="644" y="585">8</text><text x="684" y="585">9</text><text x="720" y="585">10</text>
                        </g>
                    </svg>
                    <div class="graph-tabs">
                        <button type="button">Graphics Annotations</button>
                        <button type="button">Messages</button>
                        <button type="button" class="on">Graph</button>
                    </div>
                </section>

                <section class="panel tabular">
                    <h2 class="panel-title">Tabular Data <svg><use href="#pushpin"/></svg></h2>
                    <table class="data">
                        <thead>
                            <tr>
                                <th class="num"></th>
                                <th class="point">Points</th>
                                <th class="x"><label><input type="checkbox" checked>X [rpm]</label></th>
                                <th class="y"><label><input type="checkbox" checked>Y [rpm]</label></th>
                                <th class="z"><label><input type="checkbox" checked>Z [rpm]</label></th>
                            </tr>
                        </thead>
                        <tbody>
                            <tr><th>1</th><th>1</th><td>1.</td><td>0.</td><td>0.</td></tr>
                            <tr><th>2</th><th>2</th><td>2000.</td><td>0.</td><td>0.</td></tr>
                            <tr><th>3</th><th>3</th><td>4000.</td><td>0.</td><td>0.</td></tr>
                            <tr><th>4</th><th>4</th><td>6000.</td><td>0.</td><td>0.</td></tr>
                            <tr><th>5</th><th>5</th><td>8000.</td><td>0.</td><td>0.</td></tr>
                            <tr><th>6</th><th>6</th><td>10000</td><td>0.</td><td>0.</td></tr>
                            <tr><th>7</th><th>7</th><td class="cell-on">12000</td><td>0.</td><td>0.</td></tr>
                            <tr><th>8</th><th>8</th><td>15000</td><td>0.</td><td>0.</td></tr>
                            <tr><th>9</th><th>9</th><td>18000</td><td>0.</td><td>0.</td></tr>
                            <tr><th>10</th><th>10</th><td>20000</td><td>0.</td><td>0.</td></tr>
                            <tr><th>*</th><th></th><td></td><td></td><td></td></tr>
                        </tbody>
                    </table>
                </section>
            </div>
        </div>

        <!-- Step notes over the panels -->
        <svg class="arrows" viewBox="0 125 1080 500" aria-hidden="true">
            <path d="M250 383l11-11 1 4 70-31-67 36 2 3z" fill="#f5281e"/>
            <path d="M898 351l-37 78-6-3 2 16 11-8-4-3z" fill="#f5281e"/>
        </svg>
        <p class="note note-1">1 选择components，按坐标分量施加转速</p>
        <p class="note note-2">2 施加绕X轴转速</p>
    </main>

    <footer class="status">
        <span class="cell first"></span>
        <span class="cell second"></span>
        <span class="cell messages"><svg viewBox="0 0 14 14"><path d="M1 4h10v7H7l-3 2v-2H1z" fill="#f4d25c" stroke="#a83"/><circle cx="7" cy="5" r="4.500" fill="#1f3fc4"/><path d="M7 4.500V8M7 2v1.500" stroke="#fff" stroke-width="1.500"/></svg>3 Messages</span>
        <span class="cell selection">No Selection</span>
        <span class="cell units"><span>Metric (mm, kg, N, s, mV, mA)</span><span>Degrees</span><span>RPM</span><span>Celsi</span></span>
        <svg class="grip" viewBox="0 0 14 14"><path d="M2 14L14 2M6 14l8-8M10 14l4-4" stroke="#aaa"/></svg>
    </footer>

    <div class="taskbar">
        <svg class="ghosts" viewBox="0 0 480 30" aria-hidden="true">
            <circle cx="20" cy="15" r="13" fill="#6d8fae" opacity=".4"/>
            <path d="M4 9a17 13 0 0 1 32 0" fill="none" stroke="#dbe6f0" opacity=".8"/>
            <g fill="#fff" fill-opacity=".25" stroke="#7c8794" stroke-opacity=".6">
                <path d="M44.500.5h44v30h-44zM138.500.5h43v30h-43zM184.500.5h44v30h-44zM231.500.5h43v30h-43z"/>
                <path d="M91.500.5h38v30h-38z" fill="#8fdc90" fill-opacity=".5"/>
            </g>
            <path d="M131.500 0v30M134.500 0v30" stroke="#7fae88" opacity=".6"/>
            <circle cx="110" cy="17" r="12" fill="#6cba70" opacity=".45"/>
            <path d="M101 22v-9q8 0 8 4t-8 5M111 22v-9l4 5 4-5v9" fill="none" stroke="#558a58" stroke-width="2" opacity=".6"/>
            <path d="M64 5l12 1-2 17-8 2" fill="none" stroke="#888" stroke-width="2" opacity=".4"/>
            <path d="M149 5q8-3 20 1l1 6" fill="none" stroke="#d7b94a" stroke-width="2" opacity=".6"/>
            <path d="M197 5q6-6 14 0l2 14q-8 5-14 0z" fill="#dce4b8" opacity=".5"/>
            <path d="M239 3q3-3 7 0l-3 4zM259 3h6v4l-4 1z" fill="#efc030"/>
            <path d="M242 28l6-20h8l-7 20z" fill="#77786f"/>
            <path d="M249 8h8l8 20h-9z" fill="#77756a"/>
            <path d="M248 1h10v8h-10z" fill="#2c2c2c"/>
        </svg>
        <div class="apps">
            <button type="button" class="open" aria-label="Explorer"><svg viewBox="0 0 14 14"><path d="M1 4h4l1-2h6v9H1z" fill="#f0dc86" stroke="#caa"/><path d="M3 8h9v4H3z" fill="#9dcbe4"/></svg></button>
            <button type="button" aria-label="Media player"><svg viewBox="0 0 14 14"><rect x="1" y="1" width="12" height="12" rx="2" fill="#f28a1c" stroke="#9bb"/><circle cx="7" cy="7" r="4.500" fill="#fff"/><path d="M5.500 4.500L10 7l-4.500 2.500z" fill="#d86a10"/></svg></button>
            <button type="button" class="open" aria-label="Browser"><svg viewBox="0 0 14 14"><path d="M11 10a5 5 0 1 1 1-3H4" fill="none" stroke="#38a838" stroke-width="2"/><path d="M1 10Q6 6 13 3" stroke="#d8cf3c" fill="none"/></svg></button>
            <button type="button" aria-label="Cloud disk"><svg viewBox="0 0 14 14"><rect x="1" y="1" width="12" height="12" rx="2" fill="#fff"/><g fill="none" stroke-width="1.500"><circle cx="7" cy="5" r="2" stroke="#3a8ae8"/><circle cx="5" cy="8.500" r="2" stroke="#3a8ae8"/><circle cx="9" cy="8.500" r="2" stroke="#e65a6a"/></g></svg></button>
            <button type="button" aria-label="Snipping"><svg viewBox="0 0 14 14"><ellipse cx="6" cy="6" rx="5" ry="4" fill="#eee" stroke="#d66" stroke-width="1.500"/><path d="M7 5l4 8M11 5l-4 8" stroke="#555" stroke-width="1.300"/></svg></button>
            <button type="button" class="open" aria-label="Remote"><svg viewBox="0 0 14 14"><path d="M1 1h7v6H1z" fill="#1c2f9c"/><path d="M6 6h7v6H6z" fill="#dce8dc" stroke="#456"/><circle cx="10" cy="9" r="2" fill="#3a8a4a"/></svg></button>
            <button type="button" aria-label="G"><svg viewBox="0 0 14 14"><path d="M12 2Q4 1 3 7t8 4V7H7" fill="none" stroke="#c3271e" stroke-width="2.500"/></svg></button>
            <button type="button" aria-label="Box"><svg viewBox="0 0 14 14"><rect x="1" y="1" width="12" height="12" rx="2" fill="#fdf3dc"/><path d="M3 5l4-2 4 2v4l-4 3-4-3z" fill="#f3a52c"/><circle cx="7" cy="7" r="1.500" fill="#fff"/></svg></button>
            <button type="button" aria-label="Bird"><svg viewBox="0 0 14 14"><path d="M1 2l6 4 5-4-1 7-4 4-4-4z" fill="#222"/><path d="M7 7l6-6-1 6z" fill="#2a8a3a"/><path d="M4 8l3 2-1 3z" fill="#c22"/></svg></button>
            <button type="button" class="open" aria-label="Shield"><svg viewBox="0 0 14 14"><path d="M7 1l5 2q1 7-5 10Q1 10 2 3z" fill="#3b7ee0"/><path d="M4 5l1 4 2-3 2 3 1-4" fill="none" stroke="#fff"/></svg></button>
            <button type="button" class="open" aria-label="Search"><svg viewBox="0 0 14 14"><circle cx="8" cy="5.500" r="3.500" fill="#f2d0a4" stroke="#d8691c" stroke-width="2.500"/><path d="M6 8l-4 5" stroke="#d8691c" stroke-width="2.500"/></svg></button>
            <button type="button" aria-label="Recorder"><svg viewBox="0 0 14 14"><rect x="1" y="1" width="12" height="12" rx="2" fill="#1c1c1e"/><circle cx="7" cy="7" r="2.500" fill="none" stroke="#eee"/><path d="M3 5v4" stroke="#d33"/><path d="M11 5v4" stroke="#3aa"/></svg></button>
            <button type="button" class="open" aria-label="Weather"><svg viewBox="0 0 14 14"><circle cx="5" cy="5" r="3.500" fill="#f5c52a"/><path d="M3 12a3 3 0 0 1 1-5 3.500 3.500 0 0 1 6 0 2.500 2.500 0 0 1 1 5z" fill="#f4fafe"/><path d="M7 13h6v-2H9z" fill="#3c96dc"/></svg></button>
        </div>
        <div class="tray">
            <svg viewBox="0 0 120 16" aria-hidden="true"><path d="M0 6h10v5H0z" fill="#c4c4c0"/><circle cx="21" cy="8" r="5" fill="#8a8fc4" opacity=".7"/><path d="M19 7q0-2 2-2t2 2-2 2v2" fill="none" stroke="#eef"/><path d="M35 1h6v4h-6zM37 10h3v2h-3z" fill="#dde3e8"/><path d="M50 9l2-2 2 2z" fill="#eee"/><path d="M66 4h5v7h-5z" fill="#ddd"/><path d="M70 7h5v6h-5z" fill="#d78a84" opacity=".7"/><path d="M83 5h10v6H83zM86 13h5" fill="#aeb4b8" stroke="#dfe2e4"/><path d="M102 7h2l3-3v9l-3-3h-2z" fill="#e4e4e4"/><path d="M109 5q2 3 0 6" fill="none" stroke="#d4d4d4"/></svg>
            <div class="clock"><span>13:13</span><span>2019/6/3</span></div>
        </div>
    </div>
</body>
</html>
```
FILE: styles.css
```css
* {
    box-sizing: border-box;
}

body {
    margin: 0;
    min-height: 100vh;
    display: flex;
    flex-direction: column;
    background: #f0f0f0;
    color: #222;
    font: 9px/12px "Open Sans", "Noto Sans CJK SC", sans-serif;
}

h1,
h2,
p,
ul {
    margin: 0;
    padding: 0;
    font-size: inherit;
    font-weight: normal;
}

button,
input,
select {
    margin: 0;
    padding: 0;
    border: 0;
    border-radius: 0;
    background: none;
    color: inherit;
    font: inherit;
}

.sprite {
    position: absolute;
    width: 0;
    height: 0;
}

/* Title bar */
.titlebar {
    display: flex;
    align-items: center;
    height: 17px;
    padding: 0 2px;
    gap: 5px;
    border-top: 1px solid #43546b;
    background: linear-gradient(#8fabcc, #b4cbe4);
}

.app-logo {
    width: 13px;
    height: 13px;
}

.window-buttons {
    display: flex;
    gap: 2px;
    margin-left: auto;
    align-self: flex-start;
}

.window-buttons button {
    width: 23px;
    height: 13px;
    border: 1px solid #6f87a3;
    border-top: 0;
    border-radius: 0 0 3px 3px;
    background: linear-gradient(#c4d4e6, #9bb3ce);
}

.window-buttons .close {
    background: linear-gradient(#dd9484, #c4432a);
}

.window-buttons svg {
    display: block;
    width: 100%;
    height: 12px;
}

/* Toolbars */
.bar {
    display: flex;
    align-items: center;
    height: 18px;
    padding-left: 9px;
    border-bottom: 1px solid #c4c4c4;
    background: linear-gradient(#bbb, #bbb) 3px 2px / 1px 13px no-repeat #f1f1f0;
    white-space: nowrap;
}

.bar.icons {
    padding-left: 6px;
}

.bar.wide {
    padding-left: 6px;
}

.menu {
    display: flex;
    gap: 9px;
    padding: 0 8px 0 1px;
}

.sep {
    width: 1px;
    height: 14px;
    margin: 0 2px;
    background: #bdbdbd;
}

.tool {
    display: flex;
    flex: none;
    align-items: center;
    justify-content: center;
    width: 20px;
    height: 17px;
}

.tool.drop {
    gap: 1px;
    width: 29px;
}

.icons .tool.drop {
    width: 31px;
}

.tool.active {
    background: #fff;
}

.tool svg,
.item svg {
    flex: none;
    width: 14px;
    height: 14px;
}

.item {
    display: flex;
    align-items: center;
    gap: 1px;
    padding-right: 4px;
}

.spaced {
    padding-left: 4px;
}

.roomy {
    padding: 0 10px 0 6px;
}

.wide .item {
    padding: 0 5px 0 4px;
}

.wide .tool {
    margin-left: 1px;
}

.drop::after,
.select::after {
    content: "";
    border: 3px solid transparent;
    border-top: 4px solid #111;
    border-bottom: 0;
}

.item.drop::after {
    margin: 0 1px 0 6px;
}

.off {
    color: #aaa;
}

.off::after {
    border-top-color: #999;
}

.bar-name {
    padding-right: 4px;
}

.bar:last-child {
    padding-left: 7px;
    border-bottom: 0;
}

.select {
    display: flex;
    align-items: center;
    height: 14px;
    padding: 0 5px 0 2px;
    background: #fff;
}

.select select {
    flex: 1;
    appearance: none;
}

.select.scale {
    width: 112px;
    margin-left: 8px;
    background: none;
    color: #999;
}

.scale::after {
    border-top-color: #aaa;
}

.scale select:disabled {
    color: #999;
    opacity: 1;
}

.select.center {
    width: 106px;
    margin: 0 2px 0 6px;
}

.explode {
    padding: 0 7px 2px;
}

input[type="range"] {
    appearance: none;
    width: 101px;
    height: 12px;
    background: linear-gradient(#999, #999) 0 5px / 100% 1px no-repeat;
}

input[type="range"]::-webkit-slider-thumb {
    appearance: none;
    width: 4px;
    height: 9px;
    border: 1px solid #999;
    background: #eee;
}

/* Workspace */
.workspace {
    position: relative;
    flex: 1;
    display: grid;
    grid-template-columns: 314px minmax(0, 1fr);
    gap: 4px;
    padding: 1px 0 3px;
}

.side,
.content {
    display: flex;
    flex-direction: column;
    min-width: 0;
}

.panel {
    display: flex;
    flex-direction: column;
}

.panel-title {
    display: flex;
    align-items: center;
    justify-content: space-between;
    height: 17px;
    padding: 0 2px;
    background: linear-gradient(90deg, #bac8d9, #d8e5f4);
    border-bottom: 1px solid #919ba6;
    color: #5a6877;
}

.panel-title svg {
    width: 10px;
    height: 10px;
    color: #111;
}

.panel-title.current {
    border-bottom: 0;
    background: linear-gradient(90deg, #98b2d1, #b6cde8);
    color: #eef4fb;
}

.current svg {
    color: #fff;
}

.outline {
    height: 173px;
    margin-bottom: 5px;
    border-left: 1px solid #888;
}

.filter,
.tree-tools {
    display: flex;
    align-items: center;
    height: 20px;
    padding-left: 7px;
    border-bottom: 1px solid #ccc;
    background: linear-gradient(#bbb, #bbb) 3px 3px / 1px 13px no-repeat #f1f1f0;
}

.filter input {
    width: 107px;
    height: 12px;
    background: #fff;
}

.select.name {
    width: 74px;
    margin: 0 4px;
}

.tree-tools {
    height: 18px;
    border: 0;
}

.tree-tools .tool {
    width: 18px;
}

.tree-area {
    flex: 1;
    display: flex;
    justify-content: space-between;
    background: #fff;
}

.tree {
    padding-left: 26px;
    font: 8px/12px "DejaVu Sans Condensed", "DejaVu Sans", sans-serif;
    list-style: none;
}

.tree ul {
    padding-left: 20px;
    list-style: none;
}

.node {
    display: flex;
    align-items: center;
    height: 12px;
    color: #111;
    white-space: nowrap;
}

.node svg {
    width: 13px;
    height: 13px;
    margin-right: 1px;
}

.node .state {
    width: 9px;
    height: 11px;
    margin: 0 0 0 3px;
    color: #1840b0;
    font-style: normal;
    font-weight: bold;
    text-align: right;
}

.node span,
.node b {
    padding: 0 1px;
}

.node .selected {
    background: #3d8ee6;
    color: #fff;
}

.node .marked {
    background: #f5a31c;
}

.twist {
    flex: none;
    width: 7px;
    height: 7px;
    border: 1px solid #999;
    background: linear-gradient(#333, #333) center / 3px 1px no-repeat #fff;
}

.node .twist {
    margin: 0 1px;
}

.branch {
    width: 9px;
    height: 12px;
    margin: 0 -4px 0 4px;
    border-left: 1px dotted #aaa;
    background: repeating-linear-gradient(90deg, #aaa 0 1px, transparent 1px 2px) 0 6px / 100% 1px no-repeat;
}

.scrollbar {
    display: flex;
    flex-direction: column;
    width: 12px;
    background: #f1f1f1;
}

.scrollbar svg {
    width: 12px;
    height: 12px;
}

.thumb {
    height: 39px;
    margin-top: auto;
    border: 1px solid #999;
    border-radius: 2px;
    background: repeating-linear-gradient(#777 0 1px, transparent 1px 2px) center / 5px 6px no-repeat, linear-gradient(90deg, #f6f6f6, #d4d4d4);
}

.details {
    flex: 1;
    border-left: 1px solid #888;
    background: #fff;
}

.props {
    width: 100%;
    height: 176px;
    border-collapse: collapse;
    table-layout: fixed;
    font-size: 8px;
    line-height: 11px;
}

.props th,
.props td {
    padding: 0 2px;
    border: 1px solid #bfbfbf;
    font-weight: normal;
    text-align: left;
    white-space: nowrap;
}

.gutter-col {
    width: 11px;
}

.name-col {
    width: 79px;
}

.props .group th {
    font-weight: bold;
    color: #000;
}

.props .gutter {
    border-color: transparent #bfbfbf transparent transparent;
}

.gutter .twist {
    display: block;
}

.props .locked td:last-child {
    background: #e8e6e2;
}

.props label {
    display: flex;
    align-items: center;
    gap: 3px;
}

.props input {
    appearance: none;
    width: 9px;
    height: 9px;
    border: 1px solid #ccc;
}

/* Geometry window */
.viewport {
    position: relative;
    flex: 1;
    min-height: 284px;
    border-left: 1px solid #888;
    border-top: 1px solid #aaa;
    background: #fff;
}

.scene {
    position: absolute;
    inset: 0;
    width: 100%;
    height: 100%;
}

.scene text {
    font-size: 9px;
}

.ruler-text {
    fill: #111;
    text-anchor: middle;
}

.axis-text {
    text-anchor: middle;
}

.legend {
    padding: 12px;
    color: #333;
}

.legend b {
    display: block;
    color: #111;
}

.legend-item {
    display: flex;
    gap: 4px;
    margin-top: 12px;
}

.swatch {
    width: 12px;
    height: 12px;
    border: 1px solid #333;
    background: #ffff33;
}

.view-tabs {
    display: flex;
    height: 13px;
    padding-left: 2px;
    border: 1px solid #444;
    background: #f1f1f0;
}

.view-tabs button {
    position: relative;
    padding: 0 3px 0 4px;
    font-size: 8px;
    line-height: 11px;
}

/* slanted tab edge */
.view-tabs button::after {
    content: "";
    position: absolute;
    right: -1px;
    top: 0;
    height: 11px;
    border-right: 1px solid #222;
    transform: skewX(-22deg);
}

.view-tabs .on {
    font-weight: bold;
    color: #000;
}

.view-tabs .on::before {
    content: "";
    position: absolute;
    left: 0;
    top: 0;
    height: 11px;
    border-left: 1px solid #222;
    transform: skewX(22deg);
}

.lower {
    display: grid;
    grid-template-columns: minmax(0, 446fr) minmax(0, 312fr);
    gap: 4px;
    height: 194px;
    margin-top: 5px;
}

.graph {
    border-left: 1px solid #999;
    background: #fff;
}

.chart {
    flex: 1;
    min-height: 0;
}

.bars {
    fill: #c00d0d;
}

.chart text {
    fill: #222;
    font-size: 7px;
}

.y-text {
    text-anchor: end;
}

.x-text {
    text-anchor: middle;
}

.graph-tabs {
    display: flex;
    height: 17px;
    padding-left: 13px;
    background: #f4f4f4;
}

.graph-tabs button {
    position: relative;
    height: 16px;
    padding: 0 5px 0 6px;
    border: 1px solid #bbb;
    border-top: 0;
    border-left: 0;
    border-radius: 0 0 3px 3px;
}

.graph-tabs button:first-child::before {
    content: "";
    position: absolute;
    left: -5px;
    top: 0;
    height: 15px;
    border-left: 1px solid #bbb;
    transform: skewX(40deg);
}

.graph-tabs .on {
    background: #fff;
    color: #000;
    font-weight: bold;
}

.tabular {
    background: #a0a0a0;
}

.data {
    width: 72%;
    height: 171px;
    border-collapse: collapse;
    table-layout: fixed;
    background: #fff;
    line-height: 11px;
}

.data th,
.data td {
    padding: 0 3px;
    border: 1px solid #c6c6c6;
    font-weight: normal;
    text-align: left;
    white-space: nowrap;
}

.data th {
    background: #f0f0f0;
    border-color: #999;
}

.data .num {
    width: 19px;
}

.data .point {
    width: 36px;
}

.data label {
    display: flex;
    align-items: center;
    gap: 4px;
}

.data input {
    appearance: none;
    position: relative;
    width: 10px;
    height: 10px;
    border: 1px solid #999;
    background: #fff;
}

.data input:checked::after {
    content: "";
    position: absolute;
    left: 2px;
    top: 0;
    width: 3px;
    height: 5px;
    border: solid #111;
    border-width: 0 2px 2px 0;
    transform: rotate(40deg);
}

.data .x {
    color: #c62222;
}

.data .y {
    color: #22a022;
}

.data .z {
    color: #2222cc;
}

.data .cell-on {
    background: #f0f0f0;
}

/* Notes */
.arrows {
    position: absolute;
    inset: 0;
    width: 100%;
    height: 100%;
    pointer-events: none;
}

.note {
    position: absolute;
    color: #f9382e;
    font-size: 16px;
    line-height: 20px;
    white-space: nowrap;
}

.note-1 {
    left: 332px;
    top: 204px;
}

.note-2 {
    left: 849px;
    top: 205px;
}

/* Status bar */
.status {
    display: flex;
    height: 20px;
    padding: 1px 0;
    gap: 2px;
    background: #f0f0f0;
    white-space: nowrap;
}

.cell {
    display: flex;
    align-items: center;
    gap: 2px;
    padding-left: 1px;
    border: 1px solid #aaa;
    border-right-color: #fff;
    border-bottom-color: #fff;
}

.cell svg {
    width: 13px;
    height: 13px;
}

.first {
    width: 291px;
}

.second {
    width: 138px;
}

.messages {
    width: 116px;
}

.selection {
    flex: 1;
}

.units {
    width: 247px;
    gap: 15px;
}

.grip {
    width: 19px;
    height: 18px;
}

/* Taskbar */
.taskbar {
    position: relative;
    display: flex;
    justify-content: space-between;
    height: 30px;
    background: linear-gradient(transparent 8px, #b3b7bc 8px, #a9adb3), linear-gradient(90deg, #86a0bd, #a6c1de 40%, #a9c4e0 80%, #6f8aa8 85%, #7d93ad);
}

.ghosts {
    position: absolute;
    left: 0;
    top: 0;
    width: 480px;
    height: 30px;
}

.apps {
    position: relative;
    display: flex;
    align-items: flex-end;
    padding-left: 7px;
}

.apps button {
    display: grid;
    place-items: center;
    width: 35px;
    height: 22px;
}

.apps .open {
    border: 1px solid #c9cdd2;
    background: rgba(255, 255, 255, 0.2);
}

.apps svg {
    width: 14px;
    height: 14px;
}

.tray {
    display: flex;
    align-items: center;
    gap: 6px;
    padding-right: 18px;
    color: #dfe2e5;
}

.tray svg {
    width: 120px;
    height: 16px;
}

.clock {
    display: flex;
    flex-direction: column;
    align-items: center;
}
```
